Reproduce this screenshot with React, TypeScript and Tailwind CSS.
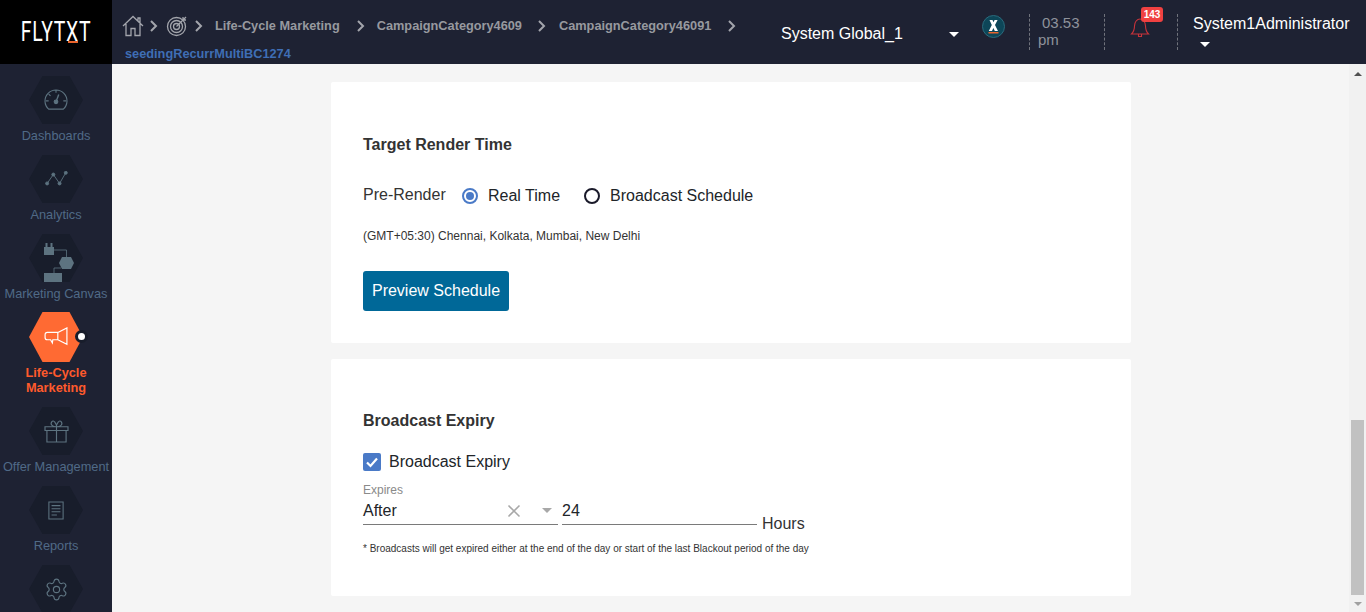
import React from "react";
import { Settings } from "lucide-react";

const Hex = ({ children }: { children: React.ReactNode }) => (
  <div className="w-[54px] h-[48px] shrink-0 flex items-center justify-center bg-[#181d2b] [clip-path:polygon(25%_0,75%_0,100%_50%,75%_100%,25%_100%,0_50%)]">
    {children}
  </div>
);

const NavItem = ({ label, children }: { label: string; children: React.ReactNode }) => (
  <div className="h-[79px] flex flex-col items-center pt-[12px] shrink-0">
    <Hex>{children}</Hex>
    <div className="mt-[3px] text-[12.75px] leading-[18px] text-[#506a87] whitespace-nowrap">{label}</div>
  </div>
);

const c = "#5d7380";

const Chevron = () => (
  <svg width="10" height="14" viewBox="0 0 10 14" fill="none" stroke="#a3a5ac" strokeWidth="2" className="shrink-0">
    <path d="M2 2l5 5-5 5" />
  </svg>
);

export default function App() {
  return (
    <div className="h-[612px] w-[1366px] overflow-hidden flex flex-col font-['Liberation_Sans',Arial,sans-serif] bg-[#f5f5f5]">
      <header className="h-[64px] shrink-0 flex bg-[#1e2233]">
        <div className="w-[112px] shrink-0 bg-black flex items-center justify-center">
          <div className="relative w-[69px] h-[20px]">
            <span className="absolute left-1/2 top-1/2 -translate-x-1/2 -translate-y-1/2 scale-x-[0.72] text-white text-[27px] leading-none tracking-[1px] font-['Roboto',sans-serif] font-normal whitespace-nowrap">
              FLYTXT
            </span>
            <span className="absolute left-[46px] top-[19px] w-[10px] h-[2px] bg-[#e8642c]" />
          </div>
        </div>
        <div className="w-[640px] shrink-0 pl-[10px] pt-[15px] flex flex-col">
          <div className="h-[22px] flex items-center text-[12.75px] font-bold text-[#97999f] whitespace-nowrap">
            <svg width="22" height="22" viewBox="0 0 22 22" fill="none" stroke="#a3a5ac" strokeWidth="1.3" className="shrink-0">
              <path d="M1 11 11 1.500 21 11M4 9v11.500h5v-7h4v7h5V9M16 6V3h2v5" />
            </svg>
            <div className="ml-[5px]"><Chevron /></div>
            <svg width="22" height="22" viewBox="0 0 22 22" fill="none" stroke="#a3a5ac" strokeWidth="1.3" className="ml-[7px] shrink-0">
              <circle cx="10.5" cy="11.5" r="9" />
              <circle cx="10.5" cy="11.5" r="6" />
              <circle cx="10.5" cy="11.5" r="3" />
              <path d="M10.5 11.500 20 2M17 2v3h3" />
            </svg>
            <div className="ml-[6px]"><Chevron /></div>
            <span className="ml-[11px]">Life-Cycle Marketing</span>
            <div className="ml-[16px]"><Chevron /></div>
            <span className="ml-[11px]">CampaignCategory4609</span>
            <div className="ml-[15px]"><Chevron /></div>
            <span className="ml-[12px]">CampaignCategory46091</span>
            <div className="ml-[16px]"><Chevron /></div>
          </div>
          <div className="ml-[3px] mt-[9px] text-[12.75px] leading-[16px] font-bold text-[#3f6eb5]">seedingRecurrMultiBC1274</div>
        </div>
        <div className="flex-1 flex items-start relative">
          <div className="ml-[29px] mt-[24px] w-[180px] flex items-center justify-between text-white text-[16px] leading-[19px]">
            <span>System Global_1</span>
            <span className="w-0 h-0 mr-[2px] mt-[2px] border-x-[5px] border-x-transparent border-t-[5px] border-t-white" />
          </div>
          <svg width="23" height="23" viewBox="0 0 23 23" className="ml-[21px] mt-[15px] shrink-0">
            <circle cx="11.5" cy="11.5" r="11" fill="#0d4658" stroke="#2b6a7c" />
            <path d="M7.500 5h3l1 2.300L12.600 5h3l-2.600 5 3 6h-3.200l-1.400-3-1.400 3H6.800l3-6z" fill="#fff" />
            <rect x="6.5" y="17" width="10" height="1.5" fill="#e8642c" />
          </svg>
          <div className="ml-[24px] mt-[14px] h-[36px] w-[76px] border-x border-dashed border-[#70737c] text-[#8f929b] text-[15px] leading-[17px] pl-[8px]">
            <div className="pl-[4px]">03.53</div>
            <div>pm</div>
          </div>
          <div className="relative w-[72px] h-[50px] shrink-0">
            <svg width="20" height="23" viewBox="0 0 20 23" fill="none" stroke="#c8333a" strokeWidth="1.1" className="absolute left-[25px] top-[16px]">
              <path d="M1.500 18c2-2 3-4 3-8 0-4 2.500-7 5.500-7s5.500 3 5.500 7c0 4 1 6 3 8zM8.500 18.500v2h3v-2" />
            </svg>
            <span className="absolute left-[36px] top-[7px] h-[15px] w-[22px] rounded-[3px] bg-[#f04141] text-white text-[10px] leading-[15px] font-bold text-center">143</span>
          </div>
          <div className="mt-[14px] h-[36px] border-l border-dashed border-[#70737c] pl-[15px] text-white text-[16px] leading-[20px] whitespace-nowrap">
            <div>System1Administrator</div>
            <div className="mt-[8px] ml-[7px] w-0 h-0 border-x-[5px] border-x-transparent border-t-[5px] border-t-white" />
          </div>
        </div>
      </header>
      <div className="flex-1 min-h-0 flex">
        <aside className="w-[112px] shrink-0 bg-[#1e2233] overflow-hidden flex flex-col">
          <NavItem label="Dashboards">
            <svg width="24" height="22" viewBox="0 0 26 24" fill="none" stroke={c} strokeWidth="1.2">
              <path d="M5 22a12 12 0 1 1 16 0zM13 1v3M2 13h3M21 13h3M5 5.500l2 2" />
              <circle cx="13" cy="14" r="2" fill={c} />
              <path d="M13 14l3-8" strokeWidth="1.5" />
            </svg>
          </NavItem>
          <NavItem label="Analytics">
            <svg width="24" height="16" viewBox="0 0 26 18" fill={c} stroke={c} strokeWidth="1">
              <path d="M3 14 10 4l7 10L24 2" fill="none" />
              <circle cx="3" cy="14" r="1.7" />
              <circle cx="10" cy="4" r="1.7" />
              <circle cx="17" cy="14" r="1.7" />
              <circle cx="24" cy="2" r="1.7" />
            </svg>
          </NavItem>
          <div className="h-[79px] flex flex-col items-center pt-[12px] shrink-0">
            <div className="relative w-[54px] h-[48px] shrink-0">
              <Hex><span /></Hex>
              <svg width="30" height="46" viewBox="0 0 30 46" fill={c} className="absolute left-[15px] top-[3px]" stroke="none">
                <path d="M0 10h10v8H0zM1.500 6h2v4h-2zM6.500 6h2v4h-2z" />
                <path d="M10 13h12.500v8M17 31H10v8" fill="none" stroke={c} strokeWidth="0.8" />
                <path d="M20 21h9l3 6-3 6h-9l-3-6z" transform="translate(-2 -1)" />
                <rect x="0" y="36" width="18" height="9" />
              </svg>
            </div>
            <div className="mt-[3px] text-[12.75px] leading-[18px] text-[#506a87] whitespace-nowrap">Marketing Canvas</div>
          </div>
          <div className="h-[94px] flex flex-col items-center pt-[11px] shrink-0">
            <div className="relative shrink-0">
              <div className="w-[54px] h-[50px] flex items-center justify-center bg-[#ff6a33] [clip-path:polygon(25%_0,75%_0,100%_50%,75%_100%,25%_100%,0_50%)]">
                <svg width="24" height="20" viewBox="0 0 26 22" fill="none" stroke="#fff" strokeWidth="1.3">
                  <path d="M15 6H3.500Q1 6 1 8.500v3Q1 14 3.500 14H7l2 3.500.5-3.500H15zM15 6l10-5v18l-10-5" />
                </svg>
              </div>
              <span className="absolute left-[46px] top-[18px] w-[13px] h-[13px] rounded-full bg-white border-[3px] border-[#181d2b]" />
            </div>
            <div className="mt-[3px] text-[12.75px] leading-[15px] font-bold text-[#ff5a2c] text-center">Life-Cycle<br />Marketing</div>
          </div>
          <NavItem label="Offer Management">
            <svg width="25" height="23" viewBox="0 0 26 24" fill="none" stroke={c} strokeWidth="1.2">
              <path d="M1 7h24v4H1zM3 11v12h20V11M13 7v16M13 7C9 7 6 5 8 2s5 2 5 5c0-3 3-8 5-5s-1 5-5 5" />
            </svg>
          </NavItem>
          <NavItem label="Reports">
            <svg width="16" height="19" viewBox="0 0 18 21" fill="none" stroke={c} strokeWidth="1.2">
              <path d="M1 1h16v19H1zM4 5h10M4 8.500h10M4 12h10M4 15.500h6" />
            </svg>
          </NavItem>
          <NavItem label="">
            <Settings size={25} strokeWidth={1.1} color={c} />
          </NavItem>
        </aside>
        <main className="flex-1 min-w-0 flex overflow-hidden">
          <div className="flex-1 flex flex-col items-center pt-[18px] pl-[1px]">
            <section className="w-[800px] h-[261px] shrink-0 bg-white rounded-[2px] pl-[32px] pt-[53px] text-[#212529]">
              <h2 className="text-[16px] leading-[20px] font-bold text-[#333]">Target Render Time</h2>
              <div className="mt-[29px] h-[24px] flex items-center text-[16px]">
                <span className="-mt-[3px] w-[82px] whitespace-nowrap text-[#333]">Pre-Render</span>
                <span className="ml-[17px] w-[16px] h-[16px] rounded-full border-2 border-[#4a7ac7] flex items-center justify-center">
                  <span className="w-[8px] h-[8px] rounded-full bg-[#4a7ac7]" />
                </span>
                <span className="ml-[10px]">Real Time</span>
                <span className="ml-[24px] w-[16px] h-[16px] rounded-full border-2 border-[#1a1a2a]" />
                <span className="ml-[10px]">Broadcast Schedule</span>
              </div>
              <div className="mt-[20px] text-[12px] leading-[16px] text-[#333]">(GMT+05:30) Chennai, Kolkata, Mumbai, New Delhi</div>
              <button className="mt-[27px] w-[146px] h-[40px] rounded-[3px] bg-[#006898] text-white text-[16px]">Preview Schedule</button>
            </section>
            <section className="mt-[16px] w-[800px] h-[237px] shrink-0 bg-white rounded-[2px] pl-[32px] pt-[52px] text-[#212529]">
              <h2 className="text-[16px] leading-[20px] font-bold text-[#333]">Broadcast Expiry</h2>
              <div className="mt-[21px] h-[20px] flex items-center text-[16px]">
                <span className="w-[18px] h-[18px] rounded-[2px] bg-[#4a7ac7] flex items-center justify-center">
                  <svg width="14" height="14" viewBox="0 0 14 14" fill="none" stroke="#fff" strokeWidth="2.2">
                    <path d="M2 7.500 5.500 11 12 3.500" />
                  </svg>
                </span>
                <span className="ml-[8px]">Broadcast Expiry</span>
              </div>
              <div className="mt-[11px] text-[12px] leading-[14px] text-[#8a8a8a]">Expires</div>
              <div className="flex items-end">
                <div className="w-[195px] h-[28px] border-b border-[#7a7a7a] flex items-center text-[16px] leading-[20px]">
                  <span className="flex-1">After</span>
                  <svg width="14" height="14" viewBox="0 0 14 14" stroke="#a8a8a8" strokeWidth="1.6" fill="none" className="mr-[21px]">
                    <path d="M1.500 1.500l11 11M12.500 1.500l-11 11" />
                  </svg>
                  <span className="mr-[6px] w-0 h-0 border-x-[5px] border-x-transparent border-t-[5px] border-t-[#a8a8a8]" />
                </div>
                <div className="ml-[4px] w-[195px] h-[28px] pt-[4px] border-b border-[#7a7a7a] text-[16px] leading-[20px]">24</div>
                <div className="ml-[5px] text-[16px] leading-[20px] -mb-[9px] text-[#333]">Hours</div>
              </div>
              <div className="mt-[18px] text-[10px] leading-[12px] text-[#333] whitespace-nowrap">* Broadcasts will get expired either at the end of the day or start of the last Blackout period of the day</div>
            </section>
          </div>
          <div className="w-[17px] shrink-0 bg-[#f1f1f1] flex flex-col items-center">
            <div className="h-[20px] flex items-center justify-center shrink-0">
              <span className="w-0 h-0 border-x-[4px] border-x-transparent border-b-[4px] border-b-[#505050]" />
            </div>
            <div className="flex-1" />
            <div className="h-[175px] w-[13px] shrink-0 bg-[#c1c1c1]" />
            <div className="h-[17px] flex items-center justify-center shrink-0">
              <span className="w-0 h-0 border-x-[4px] border-x-transparent border-t-[4px] border-t-[#a0a0a0]" />
            </div>
          </div>
        </main>
      </div>
    </div>
  );
}
